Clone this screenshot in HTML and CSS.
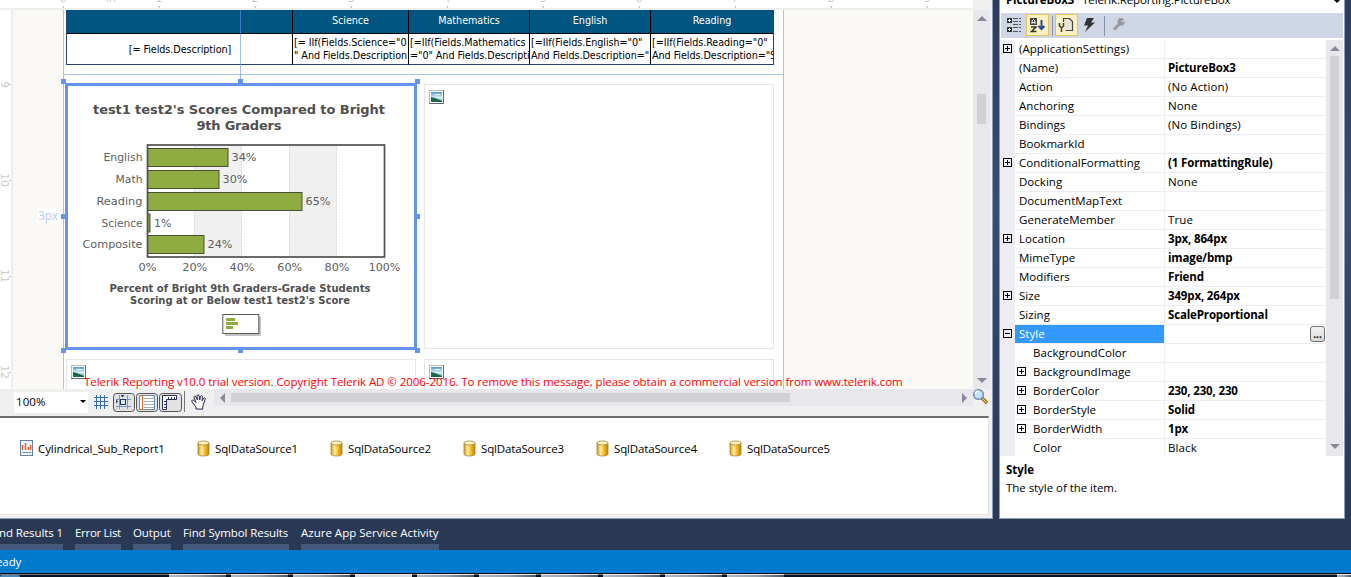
FILE: index.html
```html
<!DOCTYPE html>
<html lang="en">
<head>
    <meta charset="UTF-8">
    <meta name="viewport" content="width=device-width, initial-scale=1.0">
    <title>Report Designer</title>
    <link rel="stylesheet" href="styles.css">
</head>
<body>
    <!-- Shared icons -->
    <svg class="defs" width="0" height="0">
        <defs>
            <linearGradient id="gold" x1="0" x2="1">
                <stop offset="0" stop-color="#d89a18"/>
                <stop offset="0.35" stop-color="#fff0a0"/>
                <stop offset="0.65" stop-color="#f0b820"/>
                <stop offset="1" stop-color="#c08010"/>
            </linearGradient>
            <linearGradient id="sky" x1="0" y1="0" x2="0" y2="1">
                <stop offset="0" stop-color="#4a9bd4"/>
                <stop offset="0.55" stop-color="#d8f0f8"/>
                <stop offset="1" stop-color="#4aa0b8"/>
            </linearGradient>
            <symbol id="database" viewBox="0 0 13 17">
                <path d="M1 3v11c0 1.400 2.400 2 5.500 2s5.500-.6 5.500-2V3z" fill="url(#gold)" stroke="#a88038" stroke-width="0.800"/>
                <ellipse cx="6.500" cy="3" rx="5.500" ry="2" fill="#fff3b8" stroke="#a5803c" stroke-width="0.800"/>
            </symbol>
            <symbol id="picture" viewBox="0 0 15 14">
                <rect x="0.500" y="0.500" width="14" height="13" fill="#fff" stroke="#b4bcc4"/>
                <path d="M14.500 0v13.500H0" fill="none" stroke="#596b78"/>
                <rect x="2" y="2" width="11" height="10" fill="url(#sky)"/>
                <path d="M2 7l4 1 7 3v1H2z" fill="#1d6650"/>
                <path d="M5 4h5l2 1H7z" fill="#fff"/>
            </symbol>
        </defs>
    </svg>

    <div class="workspace">
        <div class="designer">
            <div class="ruler-top">
                <div class="marks">
                    <span class="tick">0</span><span>in</span><span class="tick">1</span><span></span>
                    <span class="tick">2</span><span></span><span class="tick">3</span><span></span>
                    <span class="tick">4</span><span></span><span class="tick">5</span><span></span>
                    <span class="tick">6</span><span></span><span class="tick">7</span><span></span>
                    <span class="tick">8</span><span></span><span class="tick">9</span>
                </div>
            </div>
            <div class="design-area">
                <div class="ruler-left">
                    <span>9</span><span>10</span><span>11</span><span>12</span>
                </div>
                <div class="canvas">
                    <div class="page">
                        <div class="section">
                            <div class="report-table">
                                <div class="th"></div>
                                <div class="th">Science</div>
                                <div class="th">Mathematics</div>
                                <div class="th">English</div>
                                <div class="th">Reading</div>
                                <div class="td first">[= Fields.Description]</div>
                                <div class="td">[= IIf(Fields.Science="0<br>" And Fields.Description</div>
                                <div class="td">[=IIf(Fields.Mathematics<br>="0" And Fields.Descripti</div>
                                <div class="td">[=IIf(Fields.English="0"<br>And Fields.Description="</div>
                                <div class="td">[=IIf(Fields.Reading="0"<br>And Fields.Description="S</div>
                            </div>
                        </div>
                        <div class="boxes">
                            <div class="picture-box selected">
                                <svg class="chart" width="346" height="261" viewBox="68 86 346 261">
                                    <g class="chart-title">
                                        <text x="93" y="114" textLength="292">test1 test2's Scores Compared to Bright</text>
                                        <text x="196.500" y="130" textLength="85">9th Graders</text>
                                    </g>
                                    <g fill="#f0f0f0">
                                        <rect x="194" y="145" width="47.500" height="112"/>
                                        <rect x="289" y="145" width="47.500" height="112"/>
                                    </g>
                                    <path d="M194.500 146v110M241.500 146v110M289.500 146v110M336.500 146v110" stroke="#dcdcdc" stroke-dasharray="2 1"/>
                                    <g fill="#8fac43" stroke="#4a4f34">
                                        <rect x="147.500" y="148.500" width="80.500" height="18"/>
                                        <rect x="147.500" y="170.500" width="71.500" height="18"/>
                                        <rect x="147.500" y="192.500" width="154.500" height="18"/>
                                        <rect x="147.500" y="214" width="2.500" height="18"/>
                                        <rect x="147.500" y="235.500" width="56.500" height="18"/>
                                    </g>
                                    <rect x="147.500" y="145" width="237" height="112" fill="none" stroke="#505050" stroke-width="1.700"/>
                                    <g class="chart-label" text-anchor="end">
                                        <text x="142.500" y="161" textLength="39" lengthAdjust="spacingAndGlyphs">English</text>
                                        <text x="142.500" y="183" textLength="27" lengthAdjust="spacingAndGlyphs">Math</text>
                                        <text x="142.500" y="205" textLength="46" lengthAdjust="spacingAndGlyphs">Reading</text>
                                        <text x="142.500" y="226.500" textLength="41" lengthAdjust="spacingAndGlyphs">Science</text>
                                        <text x="142.500" y="248" textLength="60" lengthAdjust="spacingAndGlyphs">Composite</text>
                                    </g>
                                    <g class="chart-label">
                                        <text x="231.500" y="161" textLength="25" lengthAdjust="spacingAndGlyphs">34%</text>
                                        <text x="222.500" y="183" textLength="25" lengthAdjust="spacingAndGlyphs">30%</text>
                                        <text x="305.500" y="205" textLength="25" lengthAdjust="spacingAndGlyphs">65%</text>
                                        <text x="154" y="226.500" textLength="17.500" lengthAdjust="spacingAndGlyphs">1%</text>
                                        <text x="207.500" y="248" textLength="25" lengthAdjust="spacingAndGlyphs">24%</text>
                                    </g>
                                    <g class="chart-label" text-anchor="middle">
                                        <text x="147.500" y="271" textLength="18" lengthAdjust="spacingAndGlyphs">0%</text>
                                        <text x="194.800" y="271" textLength="25" lengthAdjust="spacingAndGlyphs">20%</text>
                                        <text x="242" y="271" textLength="25" lengthAdjust="spacingAndGlyphs">40%</text>
                                        <text x="289.800" y="271" textLength="25" lengthAdjust="spacingAndGlyphs">60%</text>
                                        <text x="337" y="271" textLength="25" lengthAdjust="spacingAndGlyphs">80%</text>
                                        <text x="384.500" y="271" textLength="31.500" lengthAdjust="spacingAndGlyphs">100%</text>
                                    </g>
                                    <g class="chart-caption">
                                        <text x="109.500" y="292" textLength="261" lengthAdjust="spacingAndGlyphs">Percent of Bright 9th Graders-Grade Students</text>
                                        <text x="130" y="304" textLength="220" lengthAdjust="spacingAndGlyphs">Scoring at or Below test1 test2's Score</text>
                                    </g>
                                    <!-- legend -->
                                    <rect x="225" y="316.500" width="36" height="19.500" fill="#c4c4c4"/>
                                    <rect x="222.800" y="314.500" width="36" height="19" fill="#fff" stroke="#5a5a5a"/>
                                    <path d="M226 319.500h9M226 323.500h12M226 327.500h7" stroke="#8fac43" stroke-width="3"/>
                                </svg>
                                <i class="handle nw"></i><i class="handle n"></i><i class="handle ne"></i>
                                <i class="handle w"></i><i class="handle e"></i>
                                <i class="handle sw"></i><i class="handle s"></i><i class="handle se"></i>
                                <i class="guide"></i>
                                <span class="offset">3px</span>
                            </div>
                            <div class="picture-box"><svg width="15" height="14"><use href="#picture"/></svg></div>
                            <div class="picture-box"><svg width="15" height="14"><use href="#picture"/></svg></div>
                            <div class="picture-box"><svg width="15" height="14"><use href="#picture"/></svg></div>
                        </div>
                    </div>
                    <div class="trial">Telerik Reporting v10.0 trial version. Copyright Telerik AD © 2006-2016. To remove this message, please obtain a commercial version from www.telerik.com</div>
                </div>
                <div class="vscroll">
                    <i class="arrow up"></i>
                    <i class="thumb"></i>
                    <i class="arrow down"></i>
                </div>
            </div>
            <div class="view-bar">
                <div class="zoom-box"><span>100%</span><i></i></div>
                <svg class="view-tools" width="132" height="27" viewBox="82 389 132 27">
                    <path d="M96.500 395v14M100.500 395v14M104.500 395v14M94 397.500h14M94 401.500h14M94 405.500h14" stroke="#3569b0" fill="none"/>
                    <g fill="#e2e2e2" stroke="#555">
                        <rect x="113.500" y="393.500" width="21" height="18" rx="3"/>
                        <rect x="136.500" y="393.500" width="21" height="18" rx="3"/>
                        <rect x="159.500" y="393.500" width="22" height="18" rx="3"/>
                    </g>
                    <path d="M119.500 395v14M127.500 395v14M116 399.500h15M116 406.500h15" stroke="#6f97c8"/>
                    <rect x="120.500" y="399.500" width="5" height="5" fill="#dce8f8" stroke="#24304c"/>
                    <path d="M120.500 395h4l-2 2.500zM116 399.500v4l2-2z" fill="#1c3b78"/>
                    <rect x="139.500" y="395.500" width="15" height="14" fill="#fff" stroke="#6d89b0"/>
                    <path d="M144 398.500h10M144 401.500h10M144 404.500h10M144 407.500h10" stroke="#9bb0d0"/>
                    <path d="M142.500 395v15" stroke="#e8682c"/>
                    <path d="M162.500 409.500v-14h14v4h-10v10z" fill="#fff" stroke="#272d55"/>
                    <path d="M164 401.500h2M164 404.500h2M164 407.500h2M168.500 397v2M171.500 397v2M174.500 397v2" stroke="#272d55"/>
                    <path d="M184.500 391v21" stroke="#777"/>
                    <path d="M196 409v-2l-4-5c-1-2 1-2.500 2-1.500l2 2-2-5c-.5-1.500 1.500-2 2-.5l1.500 3-.5-4c0-1.500 2-1.500 2.200 0l.5 4 .8-3.500c.4-1.500 2-1 1.900.3l-.3 4 1.500-2.500c.8-1.200 2-.4 1.600.8l-1.700 5-.8 3v2z" fill="#fff" stroke="#25254d"/>
                </svg>
                <div class="hscroll">
                    <i class="arrow left"></i>
                    <i class="thumb"></i>
                    <i class="arrow right"></i>
                </div>
                <svg width="17" height="18" viewBox="1 1 17 18">
                    <path d="M10 10l5 5" stroke="#7a5b20" stroke-width="3.200"/>
                    <path d="M10 10l4.500 4.500" stroke="#e8b64c" stroke-width="1.600"/>
                    <circle cx="6.500" cy="6.500" r="4.800" fill="#c4e2fa" stroke="#6e8db8" stroke-width="1.500"/>
                    <path d="M3.500 6c0-2 1.500-3 3-3" stroke="#fff" fill="none" stroke-width="1.500"/>
                </svg>
            </div>
            <div class="tray">
                <div class="component report">
                    <svg width="13" height="16" viewBox="0 0 13 16">
                        <rect x="0.500" y="0.500" width="12" height="15" fill="#eef5fc" stroke="#6583a4"/>
                        <path d="M2.500 5v5M5.500 3v7M8.500 7v3M10.500 5v5" stroke="#e8602c" stroke-width="1.500"/>
                        <path d="M2 12.500h9" stroke="#7898b8"/>
                    </svg>
                    <span>Cylindrical_Sub_Report1</span>
                </div>
                <div class="component"><svg width="13" height="17"><use href="#database"/></svg><span>SqlDataSource1</span></div>
                <div class="component"><svg width="13" height="17"><use href="#database"/></svg><span>SqlDataSource2</span></div>
                <div class="component"><svg width="13" height="17"><use href="#database"/></svg><span>SqlDataSource3</span></div>
                <div class="component"><svg width="13" height="17"><use href="#database"/></svg><span>SqlDataSource4</span></div>
                <div class="component"><svg width="13" height="17"><use href="#database"/></svg><span>SqlDataSource5</span></div>
            </div>
        </div>

        <div class="properties">
            <div class="object-name"><b>PictureBox3</b><span>Telerik.Reporting.PictureBox</span><i></i></div>
            <svg class="prop-tools" width="342" height="25" viewBox="1001 13 342 25">
                <path d="M1007 18h5v5h-5zM1007 27h5v5h-5z" fill="#333"/>
                <path d="M1008 20.500h3M1009.500 19v3M1008 29.500h3M1009.500 28v3" stroke="#fff"/>
                <path d="M1013 18.500h5M1013 21.500h5M1013 24.500h5M1013 27.500h5M1013 31.500h5M1019 18.500h2M1019 21.500h2M1019 24.500h2M1019 27.500h2M1019 31.500h2" stroke="#555"/>
                <g fill="#fff2c0" stroke="#e5c365">
                    <rect x="1026.500" y="14.500" width="22" height="21"/>
                    <rect x="1055.500" y="14.500" width="22" height="21"/>
                </g>
                <path d="M1030 18h7v7h-7z" fill="#424242"/>
                <path d="M1032 24v-3l1.500-1.500L1035 21v3M1032 22.500h3" stroke="#fff" fill="none"/>
                <path d="M1031 27h5l-4.500 4.500h5" stroke="#333" fill="none" stroke-width="1.500"/>
                <path d="M1041.500 20v9M1038.500 26l3 3 3-3" stroke="#1a4f9c" fill="none" stroke-width="2"/>
                <path d="M1052.500 16v20M1104.500 16v20" stroke="#8591a8"/>
                <path d="M1063.500 22v-3.500h6l3 3v9h-7" fill="#e8e5da" stroke="#444" stroke-width="1.200"/>
                <path d="M1059.500 23v3l2 2 2-2v-3M1061.500 27v5" stroke="#444" fill="none" stroke-width="1.600"/>
                <path d="M1087 18h7l-3 4.500h4l-10 9.500 3-6.500h-4z" fill="#333"/>
                <path d="M1114 29.500l6-6" stroke="#999" stroke-width="3"/>
                <path d="M1123 19.500a3 3 0 1 0 1 3l-3 .5-1-1.500z" fill="#999" stroke="#999" stroke-width="1.500"/>
            </svg>
            <div class="prop-grid">
                <div class="rows">
                    <div class="row"><i class="exp"></i><span class="name">(ApplicationSettings)</span><span class="value"></span></div>
                    <div class="row"><span class="name">(Name)</span><b class="value">PictureBox3</b></div>
                    <div class="row"><span class="name">Action</span><span class="value">(No Action)</span></div>
                    <div class="row"><span class="name">Anchoring</span><span class="value">None</span></div>
                    <div class="row"><span class="name">Bindings</span><span class="value">(No Bindings)</span></div>
                    <div class="row"><span class="name">BookmarkId</span><span class="value"></span></div>
                    <div class="row"><i class="exp"></i><span class="name">ConditionalFormatting</span><b class="value">(1 FormattingRule)</b></div>
                    <div class="row"><span class="name">Docking</span><span class="value">None</span></div>
                    <div class="row"><span class="name">DocumentMapText</span><span class="value"></span></div>
                    <div class="row"><span class="name">GenerateMember</span><span class="value">True</span></div>
                    <div class="row"><i class="exp"></i><span class="name">Location</span><b class="value">3px, 864px</b></div>
                    <div class="row"><span class="name">MimeType</span><b class="value">image/bmp</b></div>
                    <div class="row"><span class="name">Modifiers</span><b class="value">Friend</b></div>
                    <div class="row"><i class="exp"></i><span class="name">Size</span><b class="value">349px, 264px</b></div>
                    <div class="row"><span class="name">Sizing</span><b class="value">ScaleProportional</b></div>
                    <div class="row active"><i class="exp open"></i><span class="name">Style</span><span class="value"></span><button>...</button></div>
                    <div class="row child"><span class="name">BackgroundColor</span><span class="value"></span></div>
                    <div class="row child"><i class="exp"></i><span class="name">BackgroundImage</span><span class="value"></span></div>
                    <div class="row child"><i class="exp"></i><span class="name">BorderColor</span><b class="value">230, 230, 230</b></div>
                    <div class="row child"><i class="exp"></i><span class="name">BorderStyle</span><b class="value">Solid</b></div>
                    <div class="row child"><i class="exp"></i><span class="name">BorderWidth</span><b class="value">1px</b></div>
                    <div class="row child"><span class="name">Color</span><span class="value">Black</span></div>
                </div>
                <div class="vscroll">
                    <i class="arrow up"></i>
                    <i class="thumb"></i>
                    <i class="arrow down"></i>
                </div>
            </div>
            <div class="help">
                <b>Style</b>
                <p>The style of the item.</p>
            </div>
        </div>
    </div>

    <div class="tabs">
        <span class="cut">Find Results 1</span><span class="t2">Error List</span><span class="t3">Output</span><span class="t4">Find Symbol Results</span><span class="t5">Azure App Service Activity</span>
    </div>
    <div class="status"><span>Ready</span></div>
    <div class="taskbar">
        <i class="orb"></i>
        <i></i><i></i><i></i><i class="lit"></i><i></i><i></i><i></i><i></i><i></i><i></i>
        <i class="corner"></i>
    </div>
</body>
</html>
```
FILE: styles.css
```css
* {
    margin: 0;
    padding: 0;
    box-sizing: border-box;
}

body {
    width: 1351px;
    height: 577px;
    overflow: hidden;
    display: flex;
    flex-direction: column;
    background: #293955;
    font-family: "Open Sans", "Noto Sans", sans-serif;
    font-size: 11.5px;
    letter-spacing: -0.1px;
    color: #000;
}

svg {
    display: block;
    flex: none;
}

.defs {
    position: absolute;
}

.workspace {
    display: flex;
    gap: 6px;
    height: 519px;
    flex: none;
    background: linear-gradient(#2c3d5c, #364e6f 40%, #293955);
    padding-right: 6px;
}

/* Designer */
.designer {
    width: 993px;
    flex: none;
    background: #f0f0f0;
    border-right: 1px solid #8e9bbc;
    border-bottom: 1px solid #8e9bbc;
}

.ruler-top {
    width: 973px;
    height: 10px;
    background: #fff;
    border-bottom: 2px solid #eee;
    overflow: hidden;
}

.marks {
    display: flex;
    padding-left: 39px;
    height: 8px;
}

.marks span {
    flex: 0 0 48px;
    height: 15px;
    margin-top: -7px;
    position: relative;
    text-align: center;
    font: 11px/12px "DejaVu Sans", sans-serif;
    color: #cfcac4;
}

.tick::after {
    content: "";
    position: absolute;
    left: 24px;
    bottom: 0;
    width: 1px;
    height: 2px;
    background: #bbb;
}

.design-area {
    display: flex;
    width: 990px;
    height: 379px;
}

.ruler-left {
    width: 13px;
    flex: none;
    background: #fff;
    border-right: 2px solid #eee;
    padding-top: 26px;
    overflow: hidden;
}

.ruler-left span {
    display: flex;
    justify-content: center;
    align-items: center;
    height: 96px;
    width: 11px;
    padding-right: 3px;
    writing-mode: vertical-rl;
    font: 11px/9px "DejaVu Sans", sans-serif;
    color: #cfcac4;
    background: linear-gradient(#bbb, #bbb) right 48px / 2px 1px no-repeat;
}

.canvas {
    flex: 1;
    position: relative;
    overflow: hidden;
    background: #faf9f5;
    padding-left: 50px;
}

.page {
    width: 721px;
    height: 379px;
    background: #fff;
    border: solid #a9c3f3;
    border-width: 0 1px;
}

.section {
    height: 65px;
    padding-left: 2px;
    border-bottom: 1px solid #a9c3f3;
}

.report-table {
    display: grid;
    grid-template-columns: 226px 116px 121px 121px 123px;
    grid-template-rows: 24px 31px;
    width: 708px;
    border-left: 1px solid #264478;
    font: 10.7px/13px "DejaVu Sans Condensed", "DejaVu Sans", sans-serif;
    letter-spacing: -0.05px;
}

.th,
.td {
    border-right: 1px solid #000;
    border-bottom: 1px solid #000;
    overflow: hidden;
    white-space: nowrap;
}

.th {
    background: #005581;
    color: #fff;
    text-align: center;
    line-height: 21px;
}

.td {
    border-bottom-color: #264478;
    padding: 2px 0 0 1px;
}

.td.first {
    text-align: center;
    line-height: 27px;
}

.th:nth-child(5n),
.td:nth-child(5n) {
    border-right-color: #264478;
}

.boxes {
    display: grid;
    grid-template-columns: 350px 350px;
    grid-template-rows: 265px 265px;
    column-gap: 8px;
    row-gap: 10px;
    padding: 9px 0 0 2px;
    height: 314px;
}

.picture-box {
    border: 1px solid #e6e6e6;
    padding: 5px 4px;
}

.picture-box.selected {
    position: relative;
    border: 3px solid #6495ed;
    margin: -1px;
    padding: 0;
}

.chart {
    font-family: "DejaVu Sans", sans-serif;
    letter-spacing: 0;
}

.chart-title {
    font-size: 13px;
    font-weight: bold;
    fill: #505050;
}

.chart-caption {
    font-size: 10.2px;
    font-weight: bold;
    fill: #505050;
}

.chart-label {
    font-size: 10.4px;
    fill: #606060;
}

/* Selection handles */
.handle {
    position: absolute;
    width: 5px;
    height: 5px;
    background: #6495ed;
}

.nw, .n, .ne { top: -7px; }
.w, .e { top: 128px; }
.sw, .s, .se { bottom: -6px; }
.nw, .w, .sw { left: -7px; }
.n, .s { left: 170px; }
.ne, .e, .se { right: -6px; }

.guide {
    position: absolute;
    left: 172px;
    top: -76px;
    width: 1px;
    height: 72px;
    background: rgba(100, 149, 237, 0.6);
}

.offset {
    position: absolute;
    left: -31px;
    top: 122px;
    width: 23px;
    height: 16px;
    padding-left: 1px;
    background: #fff;
    color: #b9cdf6;
    font-size: 12px;
    line-height: 16px;
}

.trial {
    position: absolute;
    left: 71px;
    top: 363px;
    line-height: 18px;
    letter-spacing: -0.067px;
    white-space: nowrap;
    color: #f00;
}

/* Scrollbars */
.vscroll {
    width: 17px;
    flex: none;
    background: #e8e8ec;
    display: flex;
    flex-direction: column;
    align-items: center;
}

.arrow {
    border: 5px solid transparent;
    flex: none;
}

.arrow.up {
    border-top: 0;
    border-bottom-color: #868999;
}

.arrow.down {
    border-bottom: 0;
    border-top-color: #868999;
    margin-top: auto;
}

.arrow.left {
    border-left: 0;
    border-right-color: #868999;
}

.arrow.right {
    border-right: 0;
    border-left-color: #868999;
    margin-left: auto;
}

.thumb {
    background: #d0d1d5;
    flex: none;
}

.design-area .vscroll {
    padding: 6px 0 6px;
}

.design-area .thumb {
    width: 9px;
    height: 30px;
    margin-top: 73px;
}

.view-bar {
    display: flex;
    height: 27px;
    padding-left: 14px;
}

.zoom-box {
    width: 74px;
    height: 21px;
    margin-top: 3px;
    padding: 0 2px 2px;
    background: #fff;
    display: flex;
    align-items: center;
    justify-content: space-between;
    letter-spacing: 0.1px;
}

.zoom-box i,
.object-name i {
    border: 3px solid transparent;
    border-top-color: #000;
    border-bottom: 0;
}

.view-tools {
    margin-left: -6px;
}

.hscroll {
    width: 759px;
    height: 17px;
    background: #e8e8ec;
    display: flex;
    align-items: center;
    padding: 0 6px;
}

.hscroll .thumb {
    width: 559px;
    height: 9px;
    margin-left: 6px;
}

.tray {
    display: flex;
    width: 989px;
    height: 99px;
    background: #fff;
    border-top: 2px solid #6c6c6c;
    border-right: 1px solid #e3e3e3;
    border-bottom: 1px solid #e3e3e3;
    padding: 21px 0 0 20px;
    letter-spacing: -0.15px;
}

.component {
    display: flex;
    align-items: center;
    gap: 5px;
    width: 133px;
    height: 18px;
}

.component.report {
    width: 177px;
    letter-spacing: -0.08px;
}

/* Properties window */
.properties {
    width: 346px;
    flex: none;
    background: #fff;
    border: solid #8e9bbc;
    border-width: 0 1px 1px;
    display: flex;
    flex-direction: column;
}

.object-name {
    height: 13px;
    flex: none;
    display: flex;
    padding: 0 4px 0 6px;
    line-height: 18px;
    overflow: hidden;
}

.object-name b,
.object-name span {
    margin-top: -9px;
}

.object-name span {
    margin-left: 8px;
    letter-spacing: -0.15px;
}

.object-name i {
    margin-left: auto;
    height: 3px;
}

.prop-tools {
    background: #cfd6e5;
    margin-left: 1px;
}

.prop-grid {
    display: flex;
    height: 418px;
    padding-top: 2px;
    flex: none;
}

.rows {
    width: 326px;
    overflow: clip;
    overflow-clip-margin: border-box;
    border-left: 15px solid #eeeef2;
}

.row {
    display: flex;
    position: relative;
    height: 19px;
    line-height: 17px;
    border-bottom: 1px solid #eeeef2;
}

.name {
    width: 150px;
    padding-left: 4px;
    border-right: 1px solid #eeeef2;
    letter-spacing: 0.03px;
}

.value {
    padding-left: 3px;
}

span.value {
    letter-spacing: 0.1px;
}

b.value {
    letter-spacing: -0.15px;
}

.child .name {
    padding-left: 18px;
}

.active .name {
    background: #3399ff;
    color: #fff;
}

.exp {
    position: absolute;
    left: -12px;
    top: 4px;
    width: 9px;
    height: 9px;
    border: 1px solid #000;
    background:
        linear-gradient(#000, #000) center / 5px 1px no-repeat,
        linear-gradient(#000, #000) center / 1px 5px no-repeat;
}

.exp.open {
    background: linear-gradient(#000, #000) center / 5px 1px no-repeat;
}

.child .exp {
    left: 2px;
}

.row button {
    width: 15px;
    height: 16px;
    margin: 1px 1px 0 auto;
    border: 1px solid #707070;
    border-radius: 3px;
    background: linear-gradient(#f4f4f4, #d8d8d8);
    font: bold 10px/10px "Open Sans", sans-serif;
}

.prop-grid .vscroll {
    padding: 6px 0 7px;
}

.prop-grid .thumb {
    width: 9px;
    height: 243px;
    margin-top: 5px;
}

.help {
    padding: 5px 6px;
    line-height: 18px;
    letter-spacing: -0.05px;
}

/* Tool tabs, status bar and task bar */
.tabs {
    display: flex;
    gap: 12px;
    height: 31px;
    flex: none;
    color: #fff;
    white-space: nowrap;
}

.tabs span {
    height: 31px;
    line-height: 28px;
    border-bottom: 6px solid #465a7d;
}

.tabs .cut {
    width: 63px;
    display: flex;
    justify-content: flex-end;
    overflow: hidden;
}

.tabs .t2 {
    width: 46px;
    letter-spacing: -0.3px;
}

.t3 {
    width: 38px;
}

.t4 {
    width: 106px;
}

.tabs .t5 {
    width: 138px;
    letter-spacing: 0;
}

.status {
    height: 23px;
    flex: none;
    background: #007acc;
    color: #fff;
    line-height: 23px;
}

.status span {
    margin-left: -11px;
}

.taskbar {
    display: flex;
    gap: 5px;
    height: 4px;
    background: linear-gradient(#07111f 1px, #6b7680 1px, #6b7680 2px, #07111f 2px);
    padding-top: 1px;
}

.taskbar i {
    flex: 0 0 57px;
    height: 3px;
    background: linear-gradient(100deg, #b4b8bd, #9a9fa6 50%, #4e565e);
    border-top: 1px solid #e8e8e8;
}

.taskbar .lit {
    background: #d8dadd;
}

.taskbar .orb {
    flex: 0 0 20px;
    margin: 1px 144px 0 0;
    height: 2px;
    border: 0;
    border-radius: 8px 8px 0 0;
    background: #4a88b8;
}

.taskbar .corner {
    flex: 0 0 14px;
    margin-left: auto;
}
```
